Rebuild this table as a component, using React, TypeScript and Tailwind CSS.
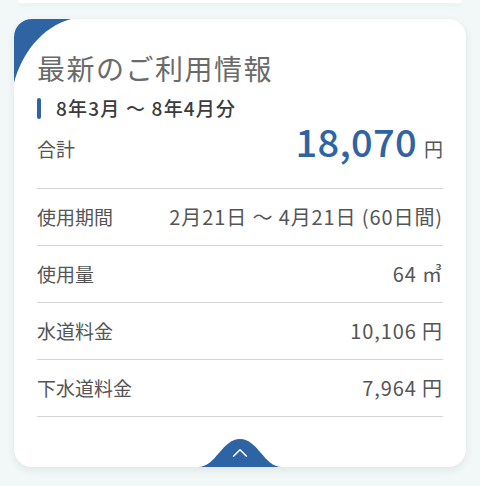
import { ChevronUp } from "lucide-react";

const rows = [
    { label: "使用期間", value: "2月21日 ～ 4月21日 (60日間)" },
    { label: "使用量", value: "64 ㎥" },
    { label: "水道料金", value: "10,106 円" },
    { label: "下水道料金", value: "7,964 円" },
];

export default function App() {
    return (
        <div className="min-h-[486px] w-[480px] bg-[#f2f7f8] overflow-hidden" style={{ fontFamily: '"Noto Sans CJK JP", "Noto Sans", sans-serif' }}>
            {/* bottom of the previous card */}
            <div className="mx-[18px] h-[3px] bg-white rounded-b-xl shadow-[0_2px_6px_rgba(0,0,0,0.06)]"></div>

            <div className="relative mx-[14px] mt-[16px] h-[448px] bg-white rounded-[18px] shadow-[0_3px_10px_rgba(0,0,0,0.08)] overflow-hidden px-[23px] pt-[32px]">
                <svg className="absolute left-0 top-0" width="80" height="80" viewBox="0 0 80 80">
                    <path d="M0 0 H57 C28 8 8 34 0 64 Z" fill="#2e64a4" />
                </svg>

                <p className="h-[34px] leading-[34px] text-[28px] tracking-[1.5px] text-[#6a6a6a]">最新のご利用情報</p>

                <div className="mt-[11px] h-[24px] flex items-center gap-[15px]">
                    <span className="w-[4px] h-[21px] rounded-full bg-[#2e64a4]"></span>
                    <span className="text-[19px] font-medium tracking-[1.2px] text-[#3b3b3b]">8年3月 ～ 8年4月分</span>
                </div>

                <div className="h-[69px] flex items-baseline justify-between pt-[2px] border-b border-[#d4d4d4]">
                    <span className="text-[19px] text-[#555]">合計</span>
                    <span className="flex items-baseline gap-[7px]">
                        <span className="text-[38px] font-medium leading-none tracking-[0.3px] text-[#2e64a4]">18,070</span>
                        <span className="text-[19px] text-[#555]">円</span>
                    </span>
                </div>

                {rows.map((row, index) => (
                    <div key={index} className="h-[57px] flex items-center justify-between border-b border-[#d4d4d4] text-[#555]">
                        <span className="text-[19px]">{row.label}</span>
                        <span className="text-[20px] tracking-[0.9px]">{row.value}</span>
                    </div>
                ))}

                <div className="absolute bottom-0 left-[184px] w-[84px] h-[28px] flex justify-center">
                    <svg className="absolute inset-0" width="84" height="28" viewBox="0 0 84 28">
                        <path d="M0 28 C18 28 24 0 42 0 C60 0 66 28 84 28 Z" fill="#2e64a4" />
                    </svg>
                    <ChevronUp className="relative mt-[1px] text-white" size={26} strokeWidth={1.4} />
                </div>
            </div>
        </div>
    );
}
